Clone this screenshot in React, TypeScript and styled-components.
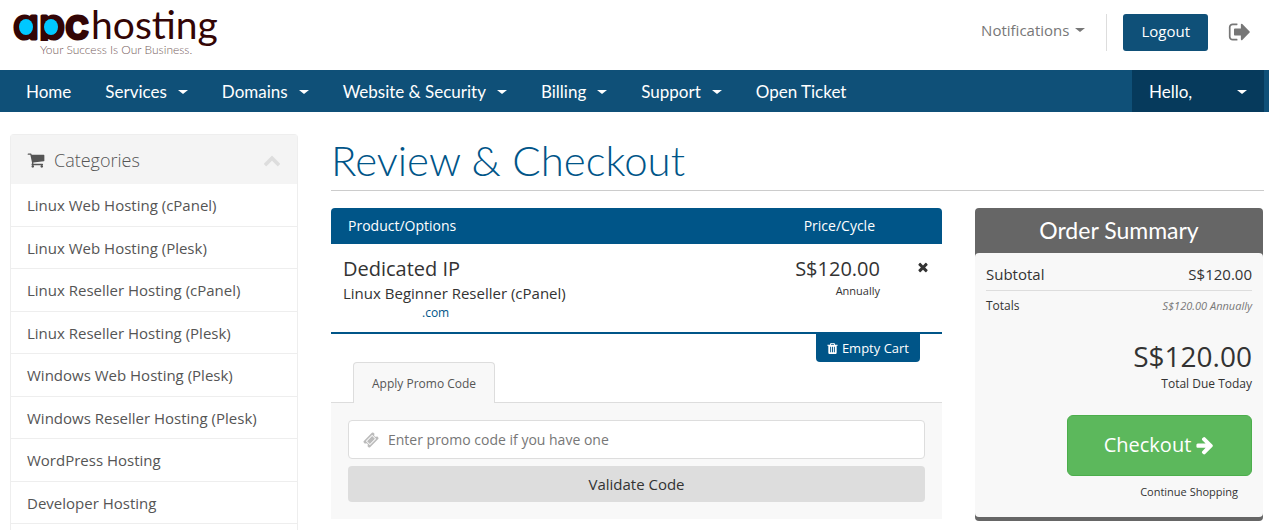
import React from "react";
import styled, { createGlobalStyle, css } from "styled-components";

const brand = "#0f5078";
const accent = "#005588";
const bodyFont = `"Open Sans", "Noto Sans", sans-serif`;
const displayFont = `Lato, "Open Sans", sans-serif`;

const GlobalStyle = createGlobalStyle`
  *, *::before, *::after { box-sizing: border-box; }
  body {
    margin: 0;
    background: #fff;
    color: #333;
    font: 15px/22px ${bodyFont};
  }
  button, input { font-family: inherit; }
  a { text-decoration: none; color: inherit; }
`;

/* ---------- icons ---------- */

const paths = {
  signOut:
    "M704 1440q0 4 1 20t.5 26.5-3 23.5-10 19.5-20.5 6.5h-320q-119 0-203.5-84.5t-84.5-203.5v-704q0-119 84.5-203.5t203.5-84.5h320q13 0 22.5 9.5t9.5 22.5q0 4 1 20t.5 26.5-3 23.5-10 19.5-20.5 6.5h-320q-66 0-113 47t-47 113v704q0 66 47 113t113 47h312l11.5 1 11.5 3 8 5.5 7 9 2 13.5zm928-544q0 26-19 45l-544 544q-19 19-45 19t-45-19-19-45v-288h-448q-26 0-45-19t-19-45v-384q0-26 19-45t45-19h448v-288q0-26 19-45t45-19 45 19l544 544q19 19 19 45z",
  cart:
    "M704 1536q0 52-38 90t-90 38-90-38-38-90 38-90 90-38 90 38 38 90zm896 0q0 52-38 90t-90 38-90-38-38-90 38-90 90-38 90 38 38 90zm128-1088v512q0 24-16.5 42.5t-40.5 21.5l-1044 122q13 60 13 70 0 16-24 64h920q26 0 45 19t19 45-19 45-45 19h-1024q-26 0-45-19t-19-45q0-11 8-31.5t16-36 21.5-40 15.5-29.5l-177-823h-204q-26 0-45-19t-19-45 19-45 45-19h256q16 0 28.5 6.5t19.5 15.5 13 24.5 8 26 5.5 29.5 4.5 26h1201q26 0 45 19t19 45z",
  chevronUp:
    "M1683 1331l-166 165q-19 19-45 19t-45-19l-531-531-531 531q-19 19-45 19t-45-19l-166-165q-19-19-19-45.5t19-45.5l742-741q19-19 45-19t45 19l742 741q19 19 19 45.5t-19 45.5z",
  times:
    "M1490 1322q0 40-28 68l-136 136q-28 28-68 28t-68-28l-294-294-294 294q-28 28-68 28t-68-28l-136-136q-28-28-28-68t28-68l294-294-294-294q-28-28-28-68t28-68l136-136q28-28 68-28t68 28l294 294 294-294q28-28 68-28t68 28l136 136q28 28 28 68t-28 68l-294 294 294 294q28 28 28 68z",
  trash:
    "M704 1376v-704q0-14-9-23t-23-9h-64q-14 0-23 9t-9 23v704q0 14 9 23t23 9h64q14 0 23-9t9-23zm256 0v-704q0-14-9-23t-23-9h-64q-14 0-23 9t-9 23v704q0 14 9 23t23 9h64q14 0 23-9t9-23zm256 0v-704q0-14-9-23t-23-9h-64q-14 0-23 9t-9 23v704q0 14 9 23t23 9h64q14 0 23-9t9-23zm-544-992h448l-48-117q-7-9-17-11h-317q-10 2-17 11zm928 32v64q0 14-9 23t-23 9h-96v948q0 83-47 143.5t-113 60.5h-832q-66 0-113-58.5t-47-141.5v-952h-96q-14 0-23-9t-9-23v-64q0-14 9-23t23-9h309l70-167q15-37 54-63t79-26h320q40 0 79 26t54 63l70 167h309q14 0 23 9t9 23z",
  arrowRight:
    "M1600 960q0 54-37 91l-651 651q-39 37-91 37-51 0-90-37l-75-75q-38-38-38-91t38-91l293-293h-704q-52 0-84.5-37.5t-32.5-90.5v-128q0-53 32.5-90.5t84.5-37.5h704l-293-294q-38-36-38-90t38-90l75-75q38-38 90-38 53 0 91 38l651 651q37 35 37 90z",
  ticket:
    "M1024 452l316 316-572 572-316-316zm-211 979l618-618q19-19 19-45t-19-45l-362-362q-18-18-45-18t-45 18l-618 618q-19 19-19 45t19 45l362 362q18 18 45 18t45-18zm889-637l-907 908q-37 37-90.5 37t-90.5-37l-126-126q56-56 56-136t-56-136-136-56-136 56l-125-126q-37-37-37-90.5t37-90.5l907-906q37-37 90.5-37t90.5 37l125 125q-56 56-56 136t56 136 136 56 136-56l126 125q37 37 37 90.5t-37 90.5z",
};

const Icon = ({ name, size }: { name: keyof typeof paths; size: number }) => (
  <svg width={size} height={size} viewBox="0 0 1792 1792" fill="currentColor" aria-hidden="true">
    <path d={paths[name]} />
  </svg>
);

const Caret = styled.span`
  width: 0;
  height: 0;
  border-top: 4px solid currentColor;
  border-left: 5px solid transparent;
  border-right: 5px solid transparent;
`;

/* ---------- page frame ---------- */

const Page = styled.div`
  display: flex;
  flex-direction: column;
  min-height: 100vh;
`;

const Header = styled.header`
  display: flex;
  align-items: center;
  justify-content: space-between;
  height: 70px;
  padding: 0 17px 0 10px;
`;

const LogoLink = styled.a`
  display: block;
  height: 70px;
`;

const HeaderTools = styled.div`
  display: flex;
  align-items: center;
  padding-bottom: 6px;
`;

const Notifications = styled.button`
  display: flex;
  align-items: center;
  gap: 6px;
  height: 37px;
  padding: 0 21px 4px 0;
  border: 0;
  border-right: 1px solid #ddd;
  background: none;
  color: #777;
  font-size: 15px;
`;

const LogoutButton = styled.button`
  height: 37px;
  margin: 0 20px 0 16px;
  padding: 0 18px 2px;
  border: 0;
  border-radius: 3px;
  background: ${brand};
  color: #fff;
  font-size: 15px;
  font-weight: 500;
`;

const ExitLink = styled.a`
  display: flex;
  color: #777;
`;

const NavBar = styled.nav`
  display: flex;
  justify-content: space-between;
  height: 42px;
  padding: 0 5px 0 9px;
  background: ${brand};
`;

const NavList = styled.ul`
  display: flex;
  margin: 0;
  padding: 0;
  list-style: none;
`;

const navItem = css`
  display: flex;
  align-items: center;
  height: 42px;
  gap: 11px;
  padding: 1px 17px 0;
  color: #fff;
  font: 17px/22px ${displayFont};
`;

const NavLink = styled.a`
  ${navItem}
`;

const UserMenu = styled.button`
  ${navItem}
  justify-content: space-between;
  width: 132px;
  border: 0;
  background: #063a5c;
`;

const Columns = styled.div`
  display: flex;
  flex: 1;
  gap: 33px;
  padding: 22px 5px 0 10px;
`;

/* ---------- sidebar ---------- */

const Sidebar = styled.aside`
  flex: 0 0 288px;
  border: 1px solid #eee;
  border-bottom: 0;
  border-radius: 4px 4px 0 0;
`;

const SidebarHead = styled.h2`
  display: flex;
  align-items: center;
  height: 49px;
  margin: 0;
  padding: 0 16px;
  background: #f4f4f4;
  color: #555;
  font-size: 18px;
  font-weight: 300;
`;

const SidebarTitle = styled.span`
  flex: 1;
  padding-left: 9px;
`;

const Collapse = styled.button`
  display: flex;
  padding: 0;
  border: 0;
  background: none;
  color: #ddd;
`;

const CategoryList = styled.ul`
  display: grid;
  grid-auto-rows: 1fr;
  min-height: 340px;
  margin: 0;
  padding: 0;
  list-style: none;
`;

const CategoryLink = styled.a`
  display: flex;
  align-items: center;
  height: 100%;
  padding: 1px 16px 0;
  border-bottom: 1px solid #eee;
  color: #555;
`;

/* ---------- checkout ---------- */

const Main = styled.main`
  flex: 1;
  min-width: 0;
`;

const Title = styled.h1`
  margin: 0 0 17px;
  padding: 1px 0 4px;
  border-bottom: 1px solid #ccc;
  color: ${accent};
  font: 300 42px/51px ${displayFont};
`;

const Checkout = styled.div`
  display: flex;
  align-items: flex-start;
  gap: 33px;
  padding-right: 1px;
`;

const Cart = styled.section`
  flex: 1;
  min-width: 0;
`;

const CartTable = styled.table`
  width: 100%;
  border-collapse: separate;
  border-spacing: 0;

  th {
    height: 36px;
    padding: 0 17px;
    background: ${accent};
    color: #fff;
    font-size: 14px;
    font-weight: 500;
    text-align: left;
  }
  th:first-child { border-radius: 4px 0 0 0; }
  th:last-child { width: 50px; border-radius: 0 4px 0 0; }
  td {
    height: 90px;
    padding: 13px 12px 0;
    border-bottom: 2px solid ${accent};
    vertical-align: top;
  }
  th:nth-child(2), td:nth-child(n + 2) { text-align: right; }
`;

const Large = styled.div`
  font-size: 20px;
  line-height: 24px;
`;

const Plan = styled.div`
  font-size: 15px;
  line-height: 24px;
`;

const Domain = styled.div`
  padding-left: 79px;
  color: ${accent};
  font-size: 12px;
  line-height: 16px;
`;

const Cycle = styled.div`
  font-size: 11px;
  line-height: 20px;
`;

const RemoveButton = styled.button`
  padding: 2px 0;
  border: 0;
  background: none;
  color: #333;
`;

const CartActions = styled.div`
  display: flex;
  justify-content: flex-end;
  padding-right: 22px;
`;

const EmptyCart = styled.button`
  display: flex;
  align-items: center;
  gap: 3px;
  height: 28px;
  padding: 0 11px 0 10px;
  border: 0;
  border-radius: 0 0 4px 4px;
  background: ${accent};
  color: #fff;
  font-size: 13px;
  font-weight: 500;
`;

const TabList = styled.div`
  display: flex;
  padding-left: 22px;
  border-bottom: 1px solid #ddd;
`;

const Tab = styled.button`
  height: 41px;
  margin-bottom: -1px;
  padding: 0 18px;
  border: 1px solid #ddd;
  border-bottom: 0;
  border-radius: 4px 4px 0 0;
  background: #f8f8f8;
  color: #555;
  font-size: 12px;
`;

const PromoForm = styled.form`
  display: flex;
  flex-direction: column;
  gap: 7px;
  padding: 17px;
  background: #f8f8f8;
`;

const PromoField = styled.label`
  display: flex;
  align-items: center;
  gap: 9px;
  height: 39px;
  padding: 0 14px;
  border: 1px solid #ddd;
  border-radius: 4px;
  background: #fff;
  color: #bbb;
`;

const PromoInput = styled.input`
  flex: 1;
  min-width: 0;
  padding: 0;
  border: 0;
  outline: 0;
  background: none;
  font-size: 14px;
  &::placeholder { color: #777; }
`;

const ValidateButton = styled.button`
  height: 36px;
  border: 0;
  border-radius: 4px;
  background: #ddd;
  color: #333;
  font-size: 15px;
`;

/* ---------- summary ---------- */

const Summary = styled.section`
  flex: 0 0 288px;
  padding-bottom: 4px;
  border-radius: 4px;
  background: #666;
`;

const SummaryTitle = styled.h2`
  margin: 0;
  padding-bottom: 1px;
  color: #fff;
  text-align: center;
  font: 23px/44px ${displayFont};
`;

const SummaryBody = styled.div`
  padding: 10px 11px 9px;
  border-radius: 4px;
  background: #f8f8f8;
`;

const SummaryRow = styled.div<{ $small?: boolean }>`
  display: flex;
  justify-content: space-between;
  font-size: ${(p) => (p.$small ? 12 : 15)}px;
  line-height: ${(p) => (p.$small ? 20 : 22)}px;
  ${(p) =>
    p.$small
      ? "padding-top: 5px;"
      : "padding-bottom: 5px; border-bottom: 1px solid #ddd;"}
`;

const Recurring = styled.em`
  color: #777;
  font-size: 11px;
`;

const Due = styled.div`
  padding: 22px 0 21px;
  text-align: right;
  font-size: 12px;
  line-height: 20px;
`;

const DueAmount = styled.div`
  font-size: 28px;
  line-height: 36px;
`;

const SummaryActions = styled.div`
  display: flex;
  flex-direction: column;
  align-items: flex-end;
`;

const CheckoutButton = styled.button`
  display: flex;
  align-items: center;
  justify-content: center;
  gap: 4px;
  width: 185px;
  height: 61px;
  padding: 0 0 2px;
  border: 1px solid #4cae4c;
  border-radius: 6px;
  background: #5cb85c;
  color: #fff;
  font-size: 20px;
`;

const ContinueLink = styled.a`
  padding: 6px 14px;
  font-size: 11px;
  line-height: 20px;
`;

/* ---------- data ---------- */

const navItems = [
  { label: "Home" },
  { label: "Services", menu: true },
  { label: "Domains", menu: true },
  { label: "Website & Security", menu: true },
  { label: "Billing", menu: true },
  { label: "Support", menu: true },
  { label: "Open Ticket" },
];

const categories = [
  "Linux Web Hosting (cPanel)",
  "Linux Web Hosting (Plesk)",
  "Linux Reseller Hosting (cPanel)",
  "Linux Reseller Hosting (Plesk)",
  "Windows Web Hosting (Plesk)",
  "Windows Reseller Hosting (Plesk)",
  "WordPress Hosting",
  "Developer Hosting",
];

const LogoName = styled.text`
  fill: #330505;
  stroke: #330505;
  stroke-width: 3px;
  stroke-linejoin: round;
  font: 500 42px Inter, sans-serif;
  font-feature-settings: "cv11";
`;

const LogoWord = styled.text`
  fill: #330505;
  font: 400 39px Lato, sans-serif;
`;

const LogoTagline = styled.text`
  fill: #776060;
  font: 300 12px Lato, sans-serif;
`;

/* The stem of the "p" stops at the baseline, so the name is clipped there. */
const Logo = () => (
  <svg width="214" height="70" role="img" aria-label="apc hosting">
    <clipPath id="logo-baseline">
      <rect width="214" height="41" />
    </clipPath>
    <g clipPath="url(#logo-baseline)">
      <LogoName x="3" y="39">apc</LogoName>
    </g>
    <ellipse cx="16" cy="27" rx="7" ry="8" fill="#00c8ff" />
    <ellipse cx="41" cy="27" rx="7" ry="8" fill="#00c8ff" />
    <LogoWord x="81" y="39">hosting</LogoWord>
    <LogoTagline x="30" y="54">Your Success Is Our Business.</LogoTagline>
  </svg>
);

export default function App() {
  return (
    <Page>
      <GlobalStyle />
      <Header>
        <LogoLink href="#">
          <Logo />
        </LogoLink>
        <HeaderTools>
          <Notifications>
            Notifications <Caret />
          </Notifications>
          <LogoutButton>Logout</LogoutButton>
          <ExitLink href="#" aria-label="Return">
            <Icon name="signOut" size={24} />
          </ExitLink>
        </HeaderTools>
      </Header>

      <NavBar>
        <NavList>
          {navItems.map((item) => (
            <li key={item.label}>
              <NavLink href="#">
                {item.label}
                {item.menu && <Caret />}
              </NavLink>
            </li>
          ))}
        </NavList>
        <UserMenu>
          Hello, <Caret />
        </UserMenu>
      </NavBar>

      <Columns>
        <Sidebar>
          <SidebarHead>
            <Icon name="cart" size={18} />
            <SidebarTitle>Categories</SidebarTitle>
            <Collapse aria-label="Collapse categories">
              <Icon name="chevronUp" size={18} />
            </Collapse>
          </SidebarHead>
          <CategoryList>
            {categories.map((name) => (
              <li key={name}>
                <CategoryLink href="#">{name}</CategoryLink>
              </li>
            ))}
          </CategoryList>
        </Sidebar>

        <Main>
          <Title>Review &amp; Checkout</Title>
          <Checkout>
            <Cart>
              <CartTable>
                <thead>
                  <tr>
                    <th>Product/Options</th>
                    <th>Price/Cycle</th>
                    <th />
                  </tr>
                </thead>
                <tbody>
                  <tr>
                    <td>
                      <Large>Dedicated IP</Large>
                      <Plan>Linux Beginner Reseller (cPanel)</Plan>
                      <Domain>.com</Domain>
                    </td>
                    <td>
                      <Large>S$120.00</Large>
                      <Cycle>Annually</Cycle>
                    </td>
                    <td>
                      <RemoveButton aria-label="Remove">
                        <Icon name="times" size={14} />
                      </RemoveButton>
                    </td>
                  </tr>
                </tbody>
              </CartTable>
              <CartActions>
                <EmptyCart>
                  <Icon name="trash" size={13} />
                  Empty Cart
                </EmptyCart>
              </CartActions>
              <TabList role="tablist">
                <Tab role="tab" aria-selected="true">
                  Apply Promo Code
                </Tab>
              </TabList>
              <PromoForm onSubmit={(e) => e.preventDefault()}>
                <PromoField>
                  <Icon name="ticket" size={16} />
                  <PromoInput aria-label="Promo code" placeholder="Enter promo code if you have one" />
                </PromoField>
                <ValidateButton>Validate Code</ValidateButton>
              </PromoForm>
            </Cart>

            <Summary>
              <SummaryTitle>Order Summary</SummaryTitle>
              <SummaryBody>
                <SummaryRow>
                  <span>Subtotal</span>
                  <span>S$120.00</span>
                </SummaryRow>
                <SummaryRow $small>
                  <span>Totals</span>
                  <Recurring>S$120.00 Annually</Recurring>
                </SummaryRow>
                <Due>
                  <DueAmount>S$120.00</DueAmount>
                  Total Due Today
                </Due>
                <SummaryActions>
                  <CheckoutButton>
                    Checkout <Icon name="arrowRight" size={20} />
                  </CheckoutButton>
                  <ContinueLink href="#">Continue Shopping</ContinueLink>
                </SummaryActions>
              </SummaryBody>
            </Summary>
          </Checkout>
        </Main>
      </Columns>
    </Page>
  );
}
